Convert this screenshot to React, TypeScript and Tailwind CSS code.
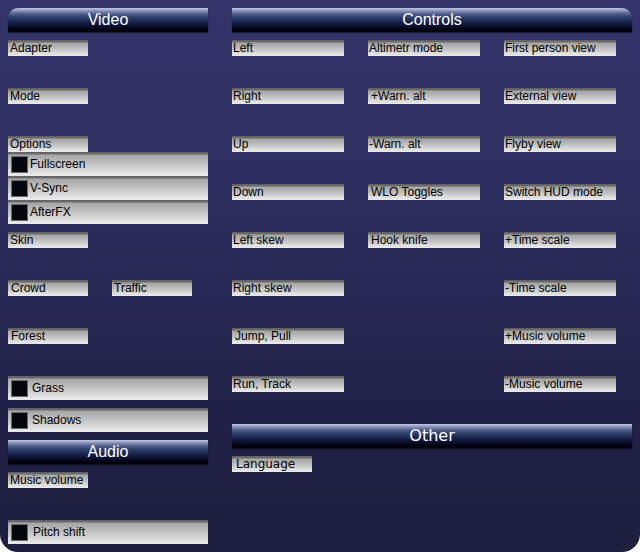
import React from 'react';

const sans = "font-['Liberation_Sans',Arial,sans-serif]";
const dejavu = "font-['DejaVu_Sans',Verdana,sans-serif]";

const labelBg =
  'bg-[linear-gradient(to_bottom,#5e5e5e_0px,#6e6e6e_2px,#a4a4a4_3px,#bdbdbd_8px,#d6d6d6_12px,#ececec_16px)]';
const rowBg =
  'bg-[linear-gradient(to_bottom,#5e5e5e_0px,#6e6e6e_2px,#a6a6a6_3px,#bcbcbc_10px,#d4d4d4_17px,#ececec_24px)]';
const headerBg =
  'bg-[linear-gradient(to_bottom,#c2c8de_0px,#9aa4c6_2px,#4c5a8a_6px,#26345f_11px,#0c1438_17px,#000010_22px,#000000_24px)]';

type HeaderProps = {
  title: string;
  corner?: 'left' | 'right';
  font?: string;
};

const Header: React.FC<HeaderProps> = ({ title, corner, font = sans }) => (
  <div
    className={`h-6 w-full ${headerBg} ${font} text-white text-[16px] leading-6 text-center shadow-[0_1px_1px_rgba(0,0,0,0.5)] ${
      corner === 'left' ? 'rounded-tl-[10px]' : corner === 'right' ? 'rounded-tr-[10px]' : ''
    }`}
  >
    {title}
  </div>
);

const Label: React.FC<{ text: string; w?: string; pad?: string; font?: string }> = ({
  text,
  w = 'w-20',
  pad = 'pl-[2px]',
  font = sans,
}) => (
  <div className={`h-4 ${w} ${labelBg} ${pad} ${font} text-[12px] leading-[17px] text-black whitespace-nowrap overflow-hidden`}>
    {text}
  </div>
);

const Check: React.FC<{ text: string; pad?: string }> = ({ text, pad = 'gap-[2px]' }) => (
  <div className={`h-6 w-full ${rowBg} flex items-center pl-[3px] ${pad} ${sans} text-[12px] text-black`}>
    <div className="w-[17px] h-[17px] bg-[#06060f] border border-[#6a6a70]" />
    <span className="leading-none">{text}</span>
  </div>
);

const col1 = ['Left', 'Right', 'Up', 'Down', 'Left skew', 'Right skew', 'Jump, Pull', 'Run, Track'];
const col2 = ['Altimetr mode', '+Warn. alt', '-Warn. alt', 'WLO Toggles', 'Hook knife'];
const col3 = [
  'First person view',
  'External view',
  'Flyby view',
  'Switch HUD mode',
  '+Time scale',
  '-Time scale',
  '+Music volume',
  '-Music volume',
];

// a few labels sit a little further in than the rest
const padFor = (t: string) =>
  ['+Warn. alt', 'WLO Toggles', 'Jump, Pull', 'Hook knife'].includes(t) ? 'pl-[3px]' : 'pl-[1px]';

export default function App() {
  return (
    <div className="w-[640px] h-[552px] bg-white">
      <div className="w-full h-full rounded-b-[18px] bg-[linear-gradient(to_bottom,#34346b_0%,#2e2e60_35%,#22224a_70%,#1e1e3e_100%)] flex gap-6 p-2">
        {/* left: video + audio */}
        <div className="w-[200px] flex flex-col">
          <Header title="Video" corner="left" />
          <div className="mt-2"><Label text="Adapter" /></div>
          <div className="mt-8"><Label text="Mode" /></div>
          <div className="mt-8"><Label text="Options" /></div>
          <Check text="Fullscreen" />
          <Check text="V-Sync" />
          <Check text="AfterFX" />
          <div className="mt-2"><Label text="Skin" /></div>
          <div className="mt-8 flex gap-6">
            <Label text="Crowd" pad="pl-[3px]" />
            <Label text="Traffic" />
          </div>
          <div className="mt-8"><Label text="Forest" pad="pl-[3px]" /></div>
          <div className="mt-8"><Check text="Grass" pad="gap-[4px]" /></div>
          <div className="mt-2"><Check text="Shadows" pad="gap-[4px]" /></div>
          <div className="mt-2"><Header title="Audio" /></div>
          <div className="mt-2"><Label text="Music volume" /></div>
          <div className="mt-8"><Check text="Pitch shift" pad="gap-[5px]" /></div>
        </div>

        {/* right: controls + other */}
        <div className="w-[400px] flex flex-col">
          <Header title="Controls" corner="right" />
          <div className="mt-2 grid grid-cols-[112px_112px_112px] gap-x-6">
            {[col1, col2, col3].map((col, i) => (
              <div key={i} className="flex flex-col gap-8">
                {col.map((t) => (
                  <Label key={t} text={t} w="w-28" pad={padFor(t)} />
                ))}
              </div>
            ))}
          </div>
          <div className="mt-8"><Header title="Other" font={dejavu} /></div>
          <div className="mt-2"><Label text="Language" font={dejavu} pad="pl-[4px]" /></div>
        </div>
      </div>
    </div>
  );
}
